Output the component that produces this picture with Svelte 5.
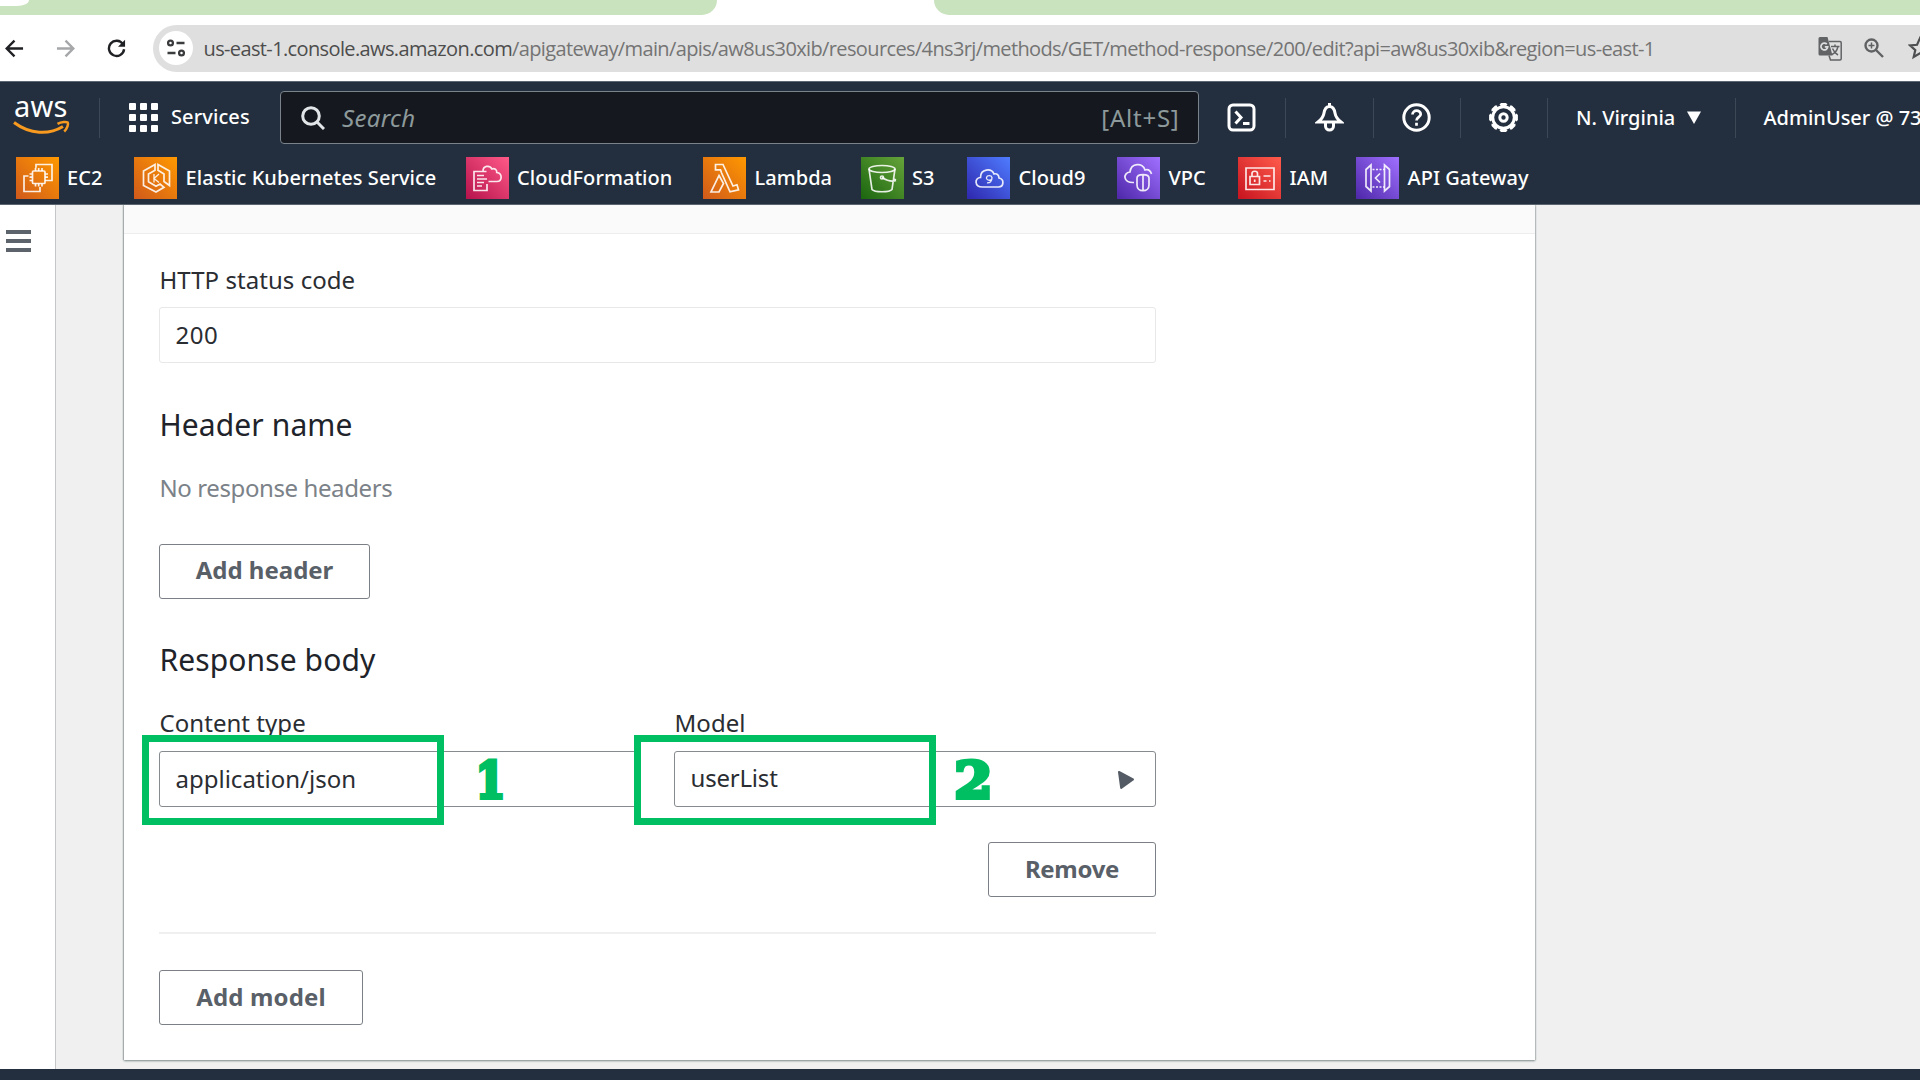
<script>
  const services = [
    { id: 'ec2', name: 'EC2', tone: 'orange' },
    { id: 'eks', name: 'Elastic Kubernetes Service', tone: 'orange' },
    { id: 'cfn', name: 'CloudFormation', tone: 'pink' },
    { id: 'lambda', name: 'Lambda', tone: 'orange' },
    { id: 's3', name: 'S3', tone: 'green' },
    { id: 'cloud9', name: 'Cloud9', tone: 'blue' },
    { id: 'vpc', name: 'VPC', tone: 'purple' },
    { id: 'iam', name: 'IAM', tone: 'red' },
    { id: 'apigw', name: 'API Gateway', tone: 'purple' }
  ];
  const gearTeeth = [0, 45, 90, 135, 180, 225, 270, 315];
</script>

<div class="screen">
  <div class="tabs">
    <div class="tab first"><span class="pill"></span></div>
    <div class="tab rest"></div>
  </div>

  <div class="toolbar">
    <svg class="back" viewBox="0 0 20 20"><path d="M19 10H2.5M10 1.8L1.8 10l8.2 8.2" /></svg>
    <svg class="forward" viewBox="0 0 20 20"><path d="M1 10h16.500M10 1.800L18.200 10 10 18.200" /></svg>
    <svg class="reload" viewBox="0 0 20 20"><path d="M16.800 5.500A8 8 0 1 0 18 10.800" /><path class="solid" d="M19 .8v7.400h-7.400z" /></svg>
    <div class="address">
      <span class="chip">
        <svg viewBox="0 0 20 18"><circle cx="4.500" cy="4" r="2.400" /><path d="M10.500 4H18.500M1.500 14H9.500" /><circle cx="15.500" cy="14" r="2.400" /></svg>
      </span>
      <span class="url"><b>us-east-1.console.aws.amazon.com</b>/apigateway/main/apis/aw8us30xib/resources/4ns3rj/methods/GET/method-response/200/edit?api=aw8us30xib&amp;region=us-east-1</span>
      <svg class="translate" viewBox="0 0 24 25">
        <path class="solid" d="M2 1h7.500l5 18.500H2a1.500 1.500 0 0 1-1.500-1.500V2.500A1.500 1.500 0 0 1 2 1z" />
        <path class="line" d="M11 5.500h11a1.200 1.200 0 0 1 1.200 1.200v16a1.200 1.200 0 0 1-1.200 1.200H12.500L11 19.500" />
        <path class="line" d="M13 10.500h8.500M17 8.500v2M20 10.500c-.8 3.500-3 6.500-6 8M14.500 12.500c1 2.500 3 5 5.500 6.500" />
        <path class="cut" d="M8.800 8.200a3.400 3.400 0 1 0 .9 2.700H6.800" />
      </svg>
      <svg class="zoom" viewBox="0 0 20 20"><circle cx="7.500" cy="7.500" r="6" /><path d="M12 12l7 7" /><path class="thin" d="M7.500 4.500v6M4.500 7.500h6" /></svg>
      <svg class="star" viewBox="0 0 22 22"><path d="M11 2l2.700 6 6.500.6-4.900 4.300 1.500 6.400L11 15.900l-5.800 3.400 1.500-6.400L1.800 8.600 8.300 8z" /></svg>
    </div>
  </div>

  <header>
    <div class="nav">
      <div class="logo">
        <span>aws</span>
        <svg viewBox="0 0 57 16"><path d="M1 2.500C17 14.500 36 15 50 6.500" /><path class="tip" d="M44.500 3.800c4-2.200 9-2.200 10.300-1.300.8 1.400-.6 6.200-3.600 9" /></svg>
      </div>
      <i class="rule r1"></i>
      <div class="dots">{#each Array(9) as _}<i></i>{/each}</div>
      <span class="services-label">Services</span>
      <div class="search">
        <svg viewBox="0 0 24 24"><circle cx="10" cy="10" r="8.300" /><path d="M16 16l7 7" /></svg>
        <em>Search</em>
        <span>[Alt+S]</span>
      </div>
      <div class="cell shell">
        <svg viewBox="0 0 29 29"><rect x="2" y="2" width="25" height="25" rx="4" /><path d="M8.500 8.500l5.500 6-5.500 6M16 20.500h6.500" /></svg>
      </div>
      <i class="rule"></i>
      <div class="cell c1">
        <svg viewBox="0 0 29 29"><path d="M14.500 3.500c-4 0-5 3-5.600 7-.6 3.600-2.200 5.500-5.900 8.500h23c-3.700-3-5.300-4.900-5.900-8.500-.6-4-1.600-7-5.600-7zM14.500 0v4M10.500 19.500v3.500a4 4 0 0 0 8 0v-3.500" /></svg>
      </div>
      <i class="rule"></i>
      <div class="cell c2">
        <svg viewBox="0 0 29 29"><circle cx="14.500" cy="14.500" r="12.700" /><path class="mid" d="M10.500 11.500c0-5 8.200-5 8.200-.3 0 3-4.200 3-4.200 6.300M14.500 19.800v3" /></svg>
      </div>
      <i class="rule"></i>
      <div class="cell c3">
        <svg viewBox="0 0 29 29">
          <circle cx="14.500" cy="14.500" r="10.800" />
          {#each gearTeeth as a}<path d="M11.500 2.600L12.600 1.600h3.800L17.500 2.600" transform="rotate({a} 14.500 14.500)" />{/each}
          <circle cx="14.500" cy="14.500" r="3.700" />
        </svg>
      </div>
      <i class="rule"></i>
      <div class="region">N. Virginia<svg viewBox="0 0 14 13"><path d="M0 .5h14L7 13z" /></svg></div>
      <i class="rule"></i>
      <div class="user">AdminUser @ 73</div>
    </div>

    <div class="favorites">
      {#each services as s}
        <div class="fav">
          <span class="tile {s.tone}">
            <svg viewBox="0 0 42 42">
              {#if s.id === 'ec2'}
                <rect x="16" y="14" width="12.500" height="12.500" rx="1" />
                <path d="M20 10.500h-.5V7.500h16v16h-4M12 19H7.500v15.500h16V30M19 11v3M22.200 11v3M25.500 11v3M19 26.500v3M22.200 26.500v3M25.500 26.500v3M13 17h3M13 20.200h3M13 23.500h3M28.500 17h3M28.500 20.200h3M28.500 23.500h3" />
              {:else if s.id === 'eks'}
                <path d="M20.500 7.500L9 14v14.500L21.500 35l8-4.700-4-3.300-4 2.200-7.500-4.400V17l6.500-3.800zM23.500 7.500L35 14v14.500l-5.500-4V17l-6-3.800z" />
                <path class="fine" d="M19.500 17v8.500M24.500 17l-5 4.500 5 4" />
              {:else if s.id === 'cfn'}
                <path d="M20 14.500H7.500V33.500h13V27M10.500 18.500h7M10.500 22h10M10.500 25.500h7M10.500 29h5M16.500 14c0-5 6.500-6.500 9-2 3-1 5 1 4.800 3.500 6 .8 5.500 9 .2 9H22" />
              {:else if s.id === 'lambda'}
                <path d="M12 7.500h7.500l10 21.500 4-1.200 1.500 5-8.500 2-8.500-19-1-3h-5zM15.500 18.500l4.500 8-4.500 8.500H7.500z" />
              {:else if s.id === 's3'}
                <ellipse cx="20.500" cy="12" rx="13" ry="3.500" />
                <path d="M7.500 12l3 20.500c2.500 3 17.500 3 20 0l3-20.500M20.500 20.500c4 2.500 10 4.500 14 3M31.500 21.500l3 1.500" /><circle cx="20.500" cy="20.500" r="1.500" />
              {:else if s.id === 'cloud9'}
                <path d="M15 30C6.500 30 7 20.500 13 20.500c0-9 11-9.500 13.500-3.500 3-1 5 1.500 5 4 5.500 1 5 9-.5 9z" />
                <path class="fine" d="M24.500 20.500a2.800 2.300 0 1 1-5.500 0 2.800 2.300 0 0 1 5.500 0c0 4-2 5.500-5 5.300" />
              {:else if s.id === 'vpc'}
                <path d="M16.500 25.500C5.500 26 5 16 12.500 15c1-9.500 13-9.500 15-2 3.500-1 5.500 1 6.500 4M19.500 21c0-4.500 12-4.500 12 0v7c0 3.200-2.400 5.700-6 5.700s-6-2.500-6-5.700zM25.500 18v15.500" />
              {:else if s.id === 'iam'}
                <path d="M7.500 11h28v21.500h-28zM11.500 19.500h9.500v8h-9.500zM13.500 19.500v-3c0-3 5.500-3 5.500 0v3M16.200 22.500v2.500M25 19h7M25 24h3M30.500 24H32" />
              {:else}
                <path d="M9.500 12.500l5-4.500v26l-5-4.500zM33 12.500L28 8v26l5-4.500zM23.500 16.500L19 21l4.500 4.500" />
                <path class="dash" d="M16 12.500h12M16 30h12" />
              {/if}
            </svg>
          </span>
          <span class="name">{s.name}</span>
        </div>
      {/each}
    </div>
  </header>

  <div class="body">
    <aside><div class="burger"><i></i><i></i><i></i></div></aside>
    <main>
      <div class="strip"></div>
      <div class="form">
        <div class="label">HTTP status code</div>
        <div class="input readonly">200</div>
        <h2>Header name</h2>
        <p>No response headers</p>
        <button class="add-header">Add header</button>
        <h2 class="second">Response body</h2>
        <div class="pair">
          <div class="field">
            <div class="label">Content type</div>
            <div class="input">application/json</div>
            <div class="mark box1"></div>
            <div class="mark-number one">1</div>
          </div>
          <div class="field">
            <div class="label">Model</div>
            <div class="input model"><span>userList</span>
              <svg viewBox="0 0 18 20"><path d="M2 2l14 7.500L4.200 18z" /></svg>
            </div>
            <div class="mark box2"></div>
            <div class="mark-number two">2</div>
          </div>
        </div>
        <button class="remove">Remove</button>
        <hr />
        <button class="add-model">Add model</button>
      </div>
    </main>
  </div>
  <footer></footer>
</div>

<style>
  :global(body) { margin: 0; overflow: hidden; }
  .screen { width: 1920px; height: 1080px; overflow: hidden; display: flex; flex-direction: column; background: #fff; font-family: "Noto Sans", sans-serif; color: #202329; }
  .screen * { box-sizing: border-box; }
  svg { fill: none; flex: none; display: block; }

  .tabs { height: 15px; flex: none; display: flex; justify-content: space-between; }
  .tab { background: #cae3bf; }
  .first { width: 717px; border-bottom-right-radius: 16px; }
  .rest { width: 986px; border-bottom-left-radius: 16px; }
  .pill { display: block; width: 29px; height: 6px; background: #fff; border-bottom-right-radius: 12px 6px; }

  .toolbar { height: 66px; flex: none; display: flex; align-items: center; padding-left: 5px; }
  .toolbar > svg { width: 19px; height: 19px; stroke: #202124; stroke-width: 2.500; }
  .toolbar .forward { margin-left: 31.500px; stroke: #a5a7a9; }
  .toolbar .reload { margin-left: 32px; }
  .reload .solid { fill: #202124; stroke: none; }
  .address { margin-left: 27px; flex: 1; height: 47px; background: #dfdfdf; border-radius: 24px 0 0 24px; display: flex; align-items: center; padding-left: 6px; overflow: hidden; }
  .chip { width: 34px; height: 34px; border-radius: 50%; background: #fff; display: grid; place-items: center; flex: none; }
  .chip svg { width: 20px; height: 18px; stroke: #3b3c3e; stroke-width: 2.300; }
  .url { font: 20px/30px "Open Sans", sans-serif; letter-spacing: -.625px; color: #747474; margin-left: 11px; width: 1614.500px; flex: none; white-space: nowrap; padding-top: 1px; }
  .url b { font-weight: 400; color: #4d4d4d; }
  .translate { width: 24px; height: 25px; }
  .translate .solid { fill: #616365; }
  .translate .line { stroke: #616365; stroke-width: 1.500; }
  .translate .cut { stroke: #dfdfdf; stroke-width: 1.700; }
  .zoom { width: 20px; height: 20px; margin-left: 22px; stroke: #5f6163; stroke-width: 2.400; }
  .zoom .thin { stroke-width: 1.500; }
  .star { width: 24px; height: 24px; margin-left: 24px; stroke: #4c4e50; stroke-width: 2; }

  header { height: 124px; flex: none; background: #232f3e; color: #fff; font-size: 20px; font-weight: 500; border-top: 1px solid #5c6673; border-bottom: 1px solid #5b6570; white-space: nowrap; }
  .nav { height: 71px; display: flex; align-items: center; }
  .logo { width: 57px; margin-left: 13px; height: 40px; }
  .logo span { display: block; font: 400 29px/26px "Noto Sans", sans-serif; letter-spacing: .2px; transform: translateY(-5px); padding-left: 1px; }
  .logo svg { width: 57px; height: 16px; margin-top: -4px; stroke: #f79a1f; stroke-width: 3; }
  .logo .tip { stroke-width: 2.500; }
  .rule { width: 1px; height: 40px; background: #3d4856; flex: none; }
  .r1 { margin-left: 29px; }
  .dots { width: 29px; display: grid; grid-template-columns: repeat(3, 7px); gap: 4px; margin-left: 29px; flex: none; }
  .dots i { height: 7px; background: #fff; border-radius: 1px; }
  .services-label { margin-left: 13px; width: 109px; line-height: 28px; padding-bottom: 1px; letter-spacing: .1px; flex: none; }
  .search { width: 918.500px; height: 53px; flex: none; border: 1px solid #7a828a; border-radius: 4px; background: #15191f; display: flex; align-items: center; padding: 0 18px 0 20px; font-size: 24px; font-weight: 400; color: #8d999b; }
  .search svg { width: 24px; height: 24px; stroke: #e3e6e8; stroke-width: 3; }
  .search em { margin-left: 17px; flex: 1; letter-spacing: .3px; padding-bottom: 1px; }
  .search span { letter-spacing: .75px; padding-bottom: 1px; }
  .cell { display: grid; place-items: center; flex: none; }
  .cell svg { width: 29px; height: 29px; stroke: #fff; stroke-width: 3; }
  .cell .mid { stroke-width: 2.700; }
  .shell { width: 86px; }
  .c1 { width: 87.500px; }
  .c2 { width: 85.500px; }
  .c3 { width: 86px; }
  .region { width: 187px; padding-left: 28.500px; display: flex; align-items: center; flex: none; }
  .region svg { width: 14px; height: 13px; fill: #fff; margin-left: 12px; }
  .user { padding-left: 28px; }

  .favorites { height: 42px; margin-top: 4px; display: grid; grid-template-columns: 118.500px 331.500px 237.500px 157.500px 106.500px 150px 121px 118px 1fr; padding-left: 15.500px; }
  .fav { display: flex; align-items: center; gap: 8.500px; }
  .name { line-height: 28px; padding-bottom: 1px; letter-spacing: .05px; }
  .tile { width: 43px; height: 42px; flex: none; }
  .tile svg { width: 43px; height: 42px; stroke: #fff; stroke-opacity: .88; stroke-width: 1.700; }
  .tile .fine { stroke-width: 1.300; }
  .tile .dash { stroke-dasharray: 2 1.500; stroke-width: 1.500; }
  .orange { background: linear-gradient(45deg, #d0591b, #ff9900); }
  .pink { background: linear-gradient(45deg, #b5124c, #ff5a88); }
  .green { background: linear-gradient(45deg, #1b660f, #66a33a); }
  .blue { background: linear-gradient(45deg, #2e27ad, #4f7cff); }
  .purple { background: linear-gradient(45deg, #4d27a8, #a070ff); }
  .red { background: linear-gradient(45deg, #c7131f, #ff5c4c); }

  .body { height: 864px; flex: none; display: flex; background: #f0f0f0; }
  aside { width: 56px; background: #fff; border-right: 1px solid #c4c6c7; padding: 25px 0 0 6px; }
  .burger { width: 25px; display: grid; gap: 5px; }
  .burger i { height: 4px; background: #5c636b; }
  main { margin-left: 68px; width: 1411px; height: 855px; background: #fff; box-shadow: 0 1px 2px #7f8b8c, 1px 0 1px #cfd1d2, -1px 0 1px #b8bcbd; clip-path: inset(0 -4px -4px -4px); }
  .strip { height: 29px; background: #fafafa; border-bottom: 1px solid #ededed; }
  .form { margin: 30px 0 0 35px; width: 997px; font-size: 24px; display: flex; flex-direction: column; align-items: flex-start; }
  .label { line-height: 32px; height: 30px; color: #2a2d32; padding-left: .5px; letter-spacing: .05px; }
  .input { width: 100%; height: 56px; margin-top: 13.500px; border: 1px solid #868b8f; border-radius: 3px; line-height: 54px; padding-left: 15.500px; color: #2a2d32; display: flex; justify-content: space-between; }
  .readonly { margin-top: 13px; border-color: #e8e8e8; letter-spacing: .5px; }
  h2 { font-size: 30px; font-weight: 400; line-height: 38px; height: 36px; margin: 43px 0 0; padding-left: .5px; letter-spacing: .1px; }
  h2.second { margin-top: 42px; }
  p { margin: 30px 0 0; line-height: 31px; height: 30px; padding-left: .5px; color: #7b8288; letter-spacing: -.4px; }
  button { font: 700 24px/30px "Noto Sans", sans-serif; color: #596068; background: #fff; border: 1px solid #7a8085; border-radius: 3px; height: 55px; padding: 0 0 3px; }
  .add-header { width: 211px; margin-top: 42px; }
  .pair { margin-top: 30px; width: 100%; display: grid; grid-template-columns: 479px 482px; justify-content: space-between; }
  .field { position: relative; }
  .model { line-height: 52px; letter-spacing: -.2px; }
  .model svg { width: 18px; height: 20px; margin: 18px 20px 0 0; fill: #545b64; stroke: #545b64; stroke-width: 2; stroke-linejoin: round; }
  .remove { width: 168px; margin-top: 35.500px; align-self: flex-end; padding-bottom: 1px; letter-spacing: -.3px; }
  hr { width: 100%; height: 2px; border: 0; background: #f0f0f0; margin: 35px 0 0; }
  .add-model { width: 204px; margin-top: 36px; padding-bottom: 2px; letter-spacing: .15px; }

  /* Tutorial call-outs drawn over the form fields */
  .mark { position: absolute; width: 302px; height: 90px; border: 7px solid #00bf63; top: 28px; }
  .box1 { left: -17px; }
  .box2 { left: -40.500px; }
  .mark-number { position: absolute; top: 44px; font: 700 50px/60px "DejaVu Serif", serif; color: #00bf63; -webkit-text-stroke: 4px #00bf63; }
  .one { left: 313.500px; transform: scaleX(.86); }
  .two { left: 282px; transform: scaleX(1.1); }

  footer { flex: 1; background: #232f3e; }
</style>
